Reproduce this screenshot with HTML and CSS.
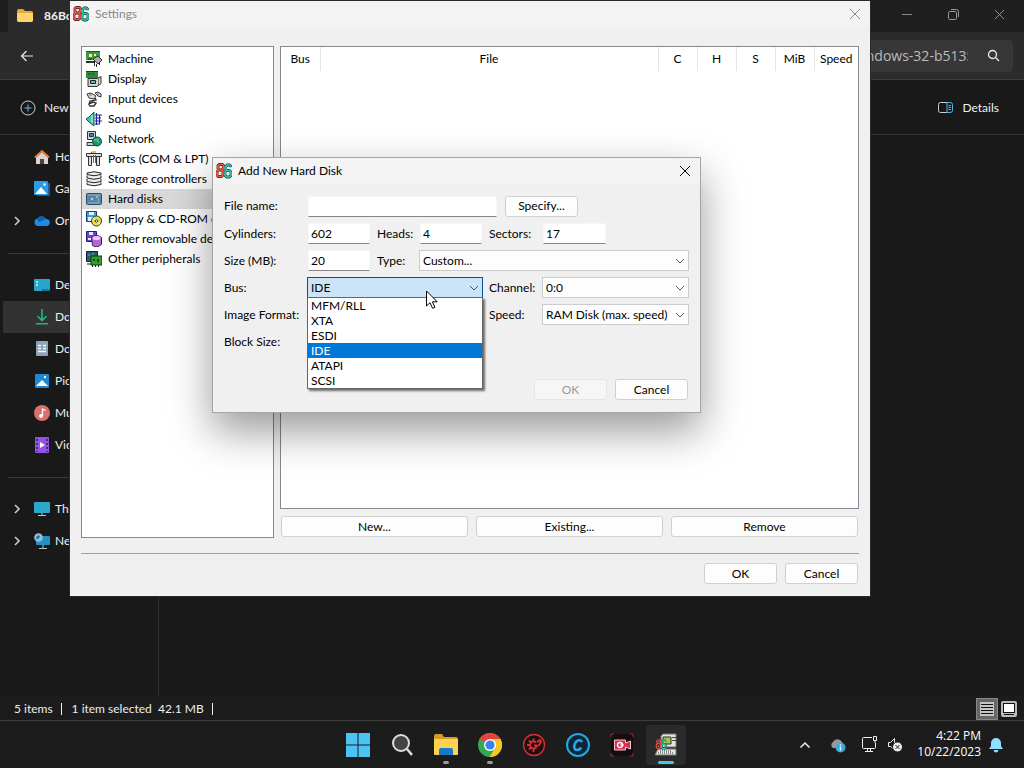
FILE: index.html
```html
<!DOCTYPE html>
<html lang="en">
<head>
	<meta charset="UTF-8">
	<title>86Box Settings</title>
	<link rel="stylesheet" href="styles.css">
</head>
<body>
<!-- shared symbols -->
<svg class="symbols" aria-hidden="true">
	<symbol id="logo" viewBox="0 0 16 16">
		<g fill="none" stroke-linejoin="round" stroke-linecap="round">
			<path d="M3 1.500h3.500l1 1v2.500l-1 1.500.500 1.500v4l-1.500 1.500H2l-1-1.500V9L2.500 7l-.500-1.500v-3zM2.500 7H6" stroke="#4a1512" stroke-width="2.800"/>
			<path d="M14.500 3l-1-1H11L9 4.500V6l1.500 1.500L9 9v3.500L10.500 14h3l1.500-1.500V9l-1.500-1.500h-3" stroke="#0c3d39" stroke-width="2.800"/>
			<path d="M3 1.500h3.500l1 1v2.500l-1 1.500.500 1.500v4l-1.500 1.500H2l-1-1.500V9L2.500 7l-.500-1.500v-3zM2.500 7H6" stroke="#f05a4c" stroke-width="1.600"/>
			<path d="M14.500 3l-1-1H11L9 4.500V6l1.500 1.500L9 9v3.500L10.500 14h3l1.500-1.500V9l-1.500-1.500h-3" stroke="#35cdb2" stroke-width="1.600"/>
			<path d="M4.500 4h1M3.500 10.500h1M12 11h.5M12 4.500h2" stroke="#f3d8d0"/>
		</g>
	</symbol>
	<symbol id="down" viewBox="0 0 10 10"><path d="M1 3l4 4 4-4" fill="none" stroke="#555"/></symbol>
	<symbol id="right" viewBox="0 0 10 10"><path d="M3 1l4 4-4 4" fill="none" stroke="#ccc" stroke-width="1.600"/></symbol>
	<symbol id="cross" viewBox="0 0 12 12"><path d="M1 1l10 10M11 1L1 11" fill="none" stroke="currentColor"/></symbol>
</svg>

<div class="explorer">
	<div class="tabs">
		<div class="tab">
			<svg width="18" height="16" viewBox="0 0 18 16"><path d="M1 3q0-2 2-2h4l2 2h6q2 0 2 2v7q0 2-2 2H3q-2 0-2-2z" fill="#e9a63a"/><path d="M1 5h16v7q0 2-2 2H3q-2 0-2-2z" fill="#fdd46c"/></svg>
			<b>86Box</b>
		</div>
		<div class="winbtns">
			<button aria-label="Minimize"><svg width="10" height="10"><path d="M0 5.500h10" stroke="#888"/></svg></button>
			<button aria-label="Restore"><svg width="11" height="11" fill="none" stroke="#999"><rect x=".5" y="2.500" width="8" height="8" rx="1"/><path d="M3 .5h5.500q2 0 2 2V8"/></svg></button>
			<button aria-label="Close"><svg width="11" height="11"><use href="#cross"/></svg></button>
		</div>
	</div>
	<div class="nav">
		<button class="back" aria-label="Back"><svg width="14" height="12" fill="none" stroke="#eee" stroke-width="1.200"><path d="M6.500 1L1.500 6l5 5M1.500 6H13"/></svg></button>
		<div class="search">
			<input type="text" aria-label="Search" value="86Box-Windows-32-b5135">
			<svg width="13" height="13" fill="none" stroke="#eee" stroke-width="1.300"><circle cx="5.500" cy="5.500" r="4"/><path d="M8.500 8.500L12 12"/></svg>
		</div>
	</div>
	<div class="tools">
		<button><svg width="16" height="16" fill="none" stroke="#c8d2d8"><circle cx="8" cy="8" r="7"/><path d="M8 4.500v7M4.500 8h7" stroke="#62b8e8"/></svg>New</button>
		<button><svg width="17" height="14" fill="none" stroke="#ccc"><path d="M10 1.500H3.500q-2 0-2 2v6q0 2 2 2H10"/><path d="M10 1.500h3q2.500 0 2.500 2v6q0 2-2.500 2h-3zM11.500 4.500H14M11.500 6.500H14M11.500 8.500H14" stroke="#4fb6ee"/></svg>Details</button>
	</div>
	<div class="files">
		<nav class="side">
			<a href="#"><i></i><svg width="16" height="16"><path d="M2 8l6-5 6 5v7h-4v-5H6v5H2z" fill="#d6d3d3"/><path d="M10 15v-5H6v5z" fill="#5d3b2e"/><path d="M1 8.500L8 2l7 6.500" fill="none" stroke="#e77b3a" stroke-width="2"/></svg>Home</a>
			<a href="#"><i></i><svg width="16" height="16"><rect x="3" y="2" width="13" height="13" rx="1" fill="#1a5c9f"/><rect width="14" height="14" rx="1" fill="#2b9be8"/><path d="M1 13l6-7 6 7z" fill="#fff"/><circle cx="10.500" cy="3.500" r="1.200" fill="#fff"/></svg>Gallery</a>
			<a href="#"><svg class="arrow"><use href="#right"/></svg><svg width="16" height="16"><path d="M4 13a3.800 3.800 0 0 1-.5-7.500A5 5 0 0 1 12 6a3.500 3.500 0 0 1 .5 7z" fill="#1b8ce8"/><path d="M3 6a5 5 0 0 1 9 0L5 9z" fill="#0b62b8"/></svg>OneDrive</a>
			<hr>
			<a href="#"><i></i><svg width="16" height="16"><rect y="2" width="16" height="12" rx="1" fill="#29a5c8"/><path d="M2 5h2M2 8h2" stroke="#d8faff" stroke-width="1.500"/><path d="M8 14h8v-2H8z" fill="#1479a0"/></svg>Desktop</a>
			<a href="#" class="on"><i></i><svg width="16" height="16" fill="none" stroke="#22b48c" stroke-width="1.600"><path d="M8 0v11M3.500 7L8 11.500 12.500 7M2 14.700h12"/></svg>Downloads</a>
			<a href="#"><i></i><svg width="16" height="16"><rect x="2" width="12" height="15" rx="1" fill="#8fa3b8"/><path d="M4 4.500h3M4 7.500h3M4 10.500h8M9 4.500h3M9 7.500h3" stroke="#f4f8ff" stroke-width="1.500"/></svg>Documents</a>
			<a href="#"><i></i><svg width="16" height="16"><rect x="1" y="1" width="14" height="14" rx="1" fill="#1f86d6"/><path d="M2 13l6-6 6 6z" fill="#fff"/><circle cx="11" cy="4" r="1.200" fill="#fff"/></svg>Pictures</a>
			<a href="#"><i></i><svg width="16" height="16"><circle cx="8" cy="8" r="8" fill="#d9706a"/><path d="M8.500 11V4l3 1.500" fill="none" stroke="#fff" stroke-width="1.300"/><circle cx="7" cy="11" r="1.900" fill="#fff"/></svg>Music</a>
			<a href="#"><i></i><svg width="16" height="16"><rect x="1" width="14" height="16" rx="1" fill="#9155df"/><path d="M3 2v13M13 2v13" stroke="#4d2590" stroke-width="2" stroke-dasharray="2 2"/><path d="M6 5l5 3-5 3z" fill="#fff"/></svg>Videos</a>
			<hr>
			<a href="#"><svg class="arrow"><use href="#right"/></svg><svg width="16" height="16"><rect y="1" width="16" height="11" rx="1" fill="#2ba8cc"/><path d="M8 12v2.500M4 14.500h8" stroke="#b8c4ca"/></svg>This PC</a>
			<a href="#"><svg class="arrow"><use href="#right"/></svg><svg width="16" height="16"><rect x="2" y="3" width="14" height="9" rx="1" fill="#2093c4"/><path d="M9 12v3M5 15.500h8" stroke="#b8c4ca"/><circle cx="4.500" cy="4.500" r="4.300" fill="#8fc1de"/><path d="M2 4l3-2 1 2-3 3z" fill="#2a6f97"/></svg>Network</a>
		</nav>
	</div>
	<footer class="status">
		<span>5 items</span><span>1 item selected&nbsp; 42.1 MB</span><span></span>
		<button class="view on" aria-label="List"><svg width="20" height="20" stroke="#111"><rect x="3" y="3" width="14" height="14" fill="#c4c4c4" stroke="none"/><path d="M4 5.500h12M4 8.500h12M4 11.500h12M4 14.500h12"/></svg></button>
		<button class="view" aria-label="Thumbnails"><svg width="16" height="16"><rect width="16" height="16" rx="2" fill="#bcbcbc"/><rect x="2.500" y="2.500" width="11" height="9" fill="#fff" stroke="#111"/><path d="M3 13.500h10" stroke="#111"/></svg></button>
	</footer>
</div>

<div class="window settings">
	<div class="title"><svg class="logo"><use href="#logo"/></svg>Settings<button aria-label="Close settings"><svg width="12" height="12"><use href="#cross"/></svg></button></div>
	<div class="panes">
		<ul class="list">
			<li><svg width="16" height="16"><path d="M0 0h14v9H0z" fill="#3d9b3c"/><path d="M0 0h14v1H0z" fill="#1b571c"/><path d="M3 3h3v3H3zM8 3h2v2H8z" fill="#f2f19b"/><path d="M0 10h9v2H0z" fill="#173d1b"/><path d="M7 8l5-3 4 4-4 4z" fill="#aaa" stroke="#333"/><path d="M8.500 11v4M10.500 13v3M13.500 11v3M2 8h4" stroke="#222"/></svg>Machine</li>
			<li><svg width="16" height="16"><path d="M0 0h12v7H0z" fill="#2f8a36"/><path d="M0 .5h12M2 3h2M6 3h2" stroke="#134617"/><path d="M2 7.500h9l4-2v7l-4 3H2z" fill="#d2d5c4" stroke="#333"/><path d="M4.500 9.500h5v3h-5z" fill="#51b8d8" stroke="#222"/><path d="M12.500 7v7" stroke="#777"/></svg>Display</li>
			<li><svg width="16" height="16" fill="#ddd" stroke="#333"><path d="M1 3l4-1 5 3-2 3-5-1z"/><path d="M9 2l3-1 3 2v3l-3-1z"/><path d="M9 7l1 2-6 1-1 3 4-2 3 1-2 3H3" fill="none" stroke-width="1.400"/><path d="M3 4h3M11 3h2" stroke="#777"/></svg>Input devices</li>
			<li><svg width="16" height="16"><path d="M0 8l3-2 5-5v14l-5-4z" fill="#42c5ad" stroke="#17534d"/><path d="M6 4v8" stroke="#b2fff1"/><path d="M9 4h7M9 7h6M9 10h7M9 13h5M10.500 2v12M13.500 4v9" stroke="#2025a5" stroke-width="1.200"/></svg>Sound</li>
			<li><svg width="16" height="16"><path d="M1.500.5h8v8h-8z" fill="#ccd7d7" stroke="#333"/><path d="M3.500 2.500h4v3h-4z" fill="#388fac" stroke="#234"/><path d="M1 11.500h8v3H1z" fill="#ccc" stroke="#333"/><circle cx="11" cy="10.500" r="4.500" fill="#1c966c" stroke="#124a38"/><path d="M8 9h3l2 3M11 7l2 2" stroke="#74dfac" fill="none"/></svg>Network</li>
			<li><svg width="16" height="16" fill="#ddd" stroke="#333"><path d="M.5 2.500h15v3H.5zM2.500 5.500h3v9h-3zM10.500 5.500h3v9h-3z"/><path d="M7.500 4v8M9.500 4v8M5 1.500h5" stroke="#666"/><path d="M6 0h4v2H6z" fill="#d1c849" stroke="none"/></svg>Ports (COM &amp; LPT)</li>
			<li><svg width="16" height="16" fill="#eee" stroke="#222"><path d="M1 11.500v2q7 2.500 14 0v-2M1 8v2.500q7 2.500 14 0V8M1 4.500V7q7 2.500 14 0V4.500"/><path d="M1 2q7-2.500 14 0v1.500q-7 2.500-14 0z"/></svg>Storage controllers</li>
			<li class="on"><svg width="16" height="16"><rect x=".5" y="2.500" width="15" height="11" rx="1" fill="#5d86a8" stroke="#284b67"/><path d="M2 4h12M2 12h12" stroke="#8fb0c8"/><circle cx="6" cy="8" r="2.500" fill="#7ba2bf" stroke="#4a7294"/><path d="M10 6h2M12 9h1M5 8h2" stroke="#dcebf7"/></svg>Hard disks</li>
			<li><svg width="16" height="16"><path d="M.5.5h10v10H.5z" fill="#36a3d7" stroke="#183c7c"/><path d="M3 1h5v3H3zM2 6h6v4H2z" fill="#e4f5ff"/><circle cx="10.500" cy="10" r="5" fill="#e5de55" stroke="#39410c"/><path d="M7 7l3 3M11 11l3 2" stroke="#fff"/><circle cx="10.500" cy="10" r="1.300" fill="#fff" stroke="#333"/></svg>Floppy &amp; CD-ROM drives</li>
			<li><svg width="16" height="16"><path d="M.5.5h10v10H.5z" fill="#5b4bd2" stroke="#261c75"/><path d="M3 1h4v3H3zM2 7h3v2H2z" fill="#f0e7ff"/><path d="M5.500 6.500q5-4 10 0v7q-5 4-9 1z" fill="#b767d1" stroke="#4a1a69"/><ellipse cx="10.500" cy="7" rx="4" ry="2" fill="#efbfff"/></svg>Other removable devices</li>
			<li><svg width="16" height="16"><path d="M.5.500h11v10H.5z" fill="#285d74" stroke="#123"/><path d="M2 12v2M4 12v2" stroke="#222"/><path d="M5 5h11v9H5z" fill="#339d32" stroke="#113d13"/><path d="M7 8h2v2H7zM11 8h2v3h-2z" fill="#174f19"/><path d="M2 4h2M6 3h2" stroke="#65bd9b"/><path d="M6.500 14v2M9.500 14v2M12.500 14v2" stroke="#222"/></svg>Other peripherals</li>
		</ul>
		<div class="disks">
			<div class="tablebox">
				<table>
					<thead>
						<tr><th class="narrow">Bus</th><th>File</th><th class="narrow">C</th><th class="narrow">H</th><th class="narrow">S</th><th class="narrow">MiB</th><th class="speed">Speed</th></tr>
					</thead>
				</table>
			</div>
			<div class="actions"><button class="btn">New...</button><button class="btn">Existing...</button><button class="btn">Remove</button></div>
		</div>
	</div>
	<div class="bottom"><button class="btn">OK</button><button class="btn">Cancel</button></div>
</div>

<div class="window dialog">
	<div class="title"><svg class="logo"><use href="#logo"/></svg>Add New Hard Disk<button aria-label="Close dialog"><svg width="12" height="12"><use href="#cross"/></svg></button></div>
	<form class="form">
		<label for="file">File name:</label>
		<div class="filerow"><input type="text" id="file"><button type="button" class="btn">Specify...</button></div>

		<label for="cyl">Cylinders:</label><input type="text" id="cyl" value="602">
		<label for="heads">Heads:</label><input type="text" id="heads" value="4">
		<label for="sectors">Sectors:</label><input type="text" id="sectors" class="sectors" value="17">

		<label for="size">Size (MB):</label><input type="text" id="size" value="20">
		<label for="type">Type:</label>
		<div class="drop wide"><select id="type"><option>Custom...</option></select><svg><use href="#down"/></svg></div>

		<label for="bus">Bus:</label>
		<div class="drop bus">
			<select id="bus"><option>IDE</option></select><svg><use href="#down"/></svg>
			<ul class="options">
				<li>MFM/RLL</li>
				<li>XTA</li>
				<li>ESDI</li>
				<li class="on">IDE</li>
				<li>ATAPI</li>
				<li>SCSI</li>
			</ul>
			<svg class="cursor" viewBox="0 0 12 19"><path d="M.5 1v15l3.500-3.300 2.600 5.600 2.300-1-2.500-5.500h4.800z" fill="#fff" stroke="#000"/></svg>
		</div>
		<label for="channel">Channel:</label>
		<div class="drop"><select id="channel"><option>0:0</option></select><svg><use href="#down"/></svg></div>

		<span class="format">Image Format:</span>
		<label for="speed">Speed:</label>
		<div class="drop"><select id="speed"><option>RAM Disk (max. speed)</option></select><svg><use href="#down"/></svg></div>

		<span>Block Size:</span>
	</form>
	<div class="bottom"><button class="btn" disabled>OK</button><button class="btn">Cancel</button></div>
</div>

<div class="taskbar">
	<div class="apps">
		<button aria-label="Start"><svg width="24" height="24" fill="#4cc2f5"><path d="M0 0h11.500v11.500H0zM12.500 0H24v11.500H12.500zM0 12.500h11.500V24H0zM12.500 12.500H24V24H12.500z"/></svg></button>
		<button aria-label="Search"><svg width="24" height="24"><circle cx="11" cy="10" r="8" fill="#444" stroke="#ddd" stroke-width="2"/><path d="M17 16l5 6" stroke="#ddd" stroke-width="2.500"/></svg></button>
		<button aria-label="File Explorer" class="open"><svg width="24" height="24"><path d="M0 3q0-2 2-2h6l2 3h12q2 0 2 2v14H0z" fill="#d69d1f"/><path d="M0 6h24v15q0 1-1 1H1q-1 0-1-1z" fill="#fcd253"/><path d="M5 22v-5q0-2 2-2h10q2 0 2 2v5z" fill="#1679cb"/></svg></button>
		<button aria-label="Chrome" class="open"><svg width="24" height="24" viewBox="0 0 24 24"><circle cx="12" cy="12" r="12" fill="#35a853"/><path d="M12 12L1.600 6A12 12 0 0 1 22.400 6z" fill="#e6443a"/><path d="M12 6h10.400A12 12 0 0 1 11.500 24L17 15z" fill="#fbc624"/><circle cx="12" cy="12" r="6" fill="#fff"/><circle cx="12" cy="12" r="4.600" fill="#3b80ee"/></svg></button>
		<button aria-label="Game app"><svg width="24" height="24" fill="none" stroke="#db3036"><circle cx="12" cy="12" r="10.500" fill="#210f0f" stroke-width="1.300"/><path d="M14 9.500a3.500 3.500 0 1 0 0 5v-2h-2" stroke-width="1.800"/><path d="M11.500 5.500v3M11.500 16v3M5 12h3M7 7.500l2 2M7 16.500l2-2M15 9l3-2 1 2-2 3-2 1" stroke-width="1.800"/></svg></button>
		<button aria-label="C app"><svg width="24" height="24" fill="none" stroke="#27a7e4"><circle cx="12" cy="12" r="11" fill="#0c2637" stroke-width="2"/><path d="M16 9q-1-2.500-4-1.500T8.300 13Q8 17 11 17t4-2.500" stroke-width="2.600"/></svg></button>
		<button aria-label="Recorder"><svg width="24" height="24"><rect x="1" y="1" width="22" height="22" fill="#160d10"/><path d="M1 4V1h3M20 1h3v3M1 20v3h3M20 23h3v-3" stroke="#a52837" fill="none"/><path d="M4.500 7h11v3l5-2v8l-5-2v3h-11z" fill="#d72e4e" stroke="#f4c6cd"/><circle cx="10" cy="12" r="2.500" fill="none" stroke="#fff" stroke-width="1.300"/><path d="M10 12h4" stroke="#fff"/></svg></button>
		<button aria-label="86Box" class="open active"><svg width="24" height="24"><path d="M9 1h13v13H7V3z" fill="#e4e4da" stroke="#777"/><path d="M9 4h8v7H9z" fill="#9cc84c" stroke="#333"/><path d="M18 4.500h4M18 7.500h4" stroke="#444"/><path d="M4 16h18v6H1z" fill="#e7e7df" stroke="#777"/><path d="M4 20h16M6 18h12" stroke="#333" stroke-dasharray="1 1"/><svg x="1" y="6" width="12" height="11"><use href="#logo"/></svg></svg></button>
	</div>
	<div class="tray">
		<svg width="12" height="8" fill="none" stroke="#eee" stroke-width="1.500"><path d="M1.500 6.500L6 2l4.500 4.500"/></svg>
		<svg class="cloud" width="17" height="16"><path d="M4 11a3.500 3.500 0 0 1 0-6 5 5 0 0 1 9 0l2 6z" fill="#999"/><circle cx="11.500" cy="10.500" r="5" fill="#3ba9e3"/><path d="M11.500 9.500v4M11.500 7.200v1.300" stroke="#fff" stroke-width="1.400"/></svg>
		<svg class="net" width="17" height="17" fill="none" stroke="#eee"><path d="M11 1.500H2.500q-1 0-1 1v9q0 1 1 1h11q1 0 1-1V7M6.500 12.500v3M9.500 12.500v3M4 15.500h8M12.500.5h3v4h-3zM14 4.500V7"/></svg>
		<svg class="vol" width="16" height="16"><path d="M1.500 5.500h2l4-4v11l-4-3h-2z" fill="none" stroke="#eee"/><circle cx="10.500" cy="10" r="5" fill="#eee" stroke="#1c1c1c"/><path d="M8.500 8l4 4M12.500 8l-4 4" stroke="#222"/></svg>
		<div class="clock">4:22 PM<br>10/22/2023</div>
		<svg class="bell" width="14" height="16" fill="#8fe0fb"><path d="M0 12l2-3V6a5 5 0 0 1 10 0v3l2 3zM4.500 13h5q-.5 2.500-2.500 2.500T4.500 13z"/></svg>
	</div>
</div>
</body>
</html>
```
FILE: styles.css
```css
*{
	box-sizing: border-box;
}
body{
	margin: 0;
	height: 100vh;
	display: flex;
	flex-direction: column;
	overflow: hidden;
	position: relative;
	background: #191919;
	color: #000;
	font: 12px/16px Lato, "Open Sans", sans-serif;
}
button, input, select{
	font: inherit;
	color: inherit;
	margin: 0;
}
button{
	padding: 0;
	border: 0;
	background: none;
}
svg{
	display: block;
	flex: none;
}
ul{
	list-style: none;
	margin: 0;
	padding: 0;
}
.symbols{
	position: absolute;
	width: 0;
	height: 0;
}

/* file explorer */
.explorer{
	flex: 1;
	min-height: 0;
	display: flex;
	flex-direction: column;
	color: #eee;
}
.tabs{
	height: 32px;
	display: flex;
	justify-content: space-between;
	background: #1f1f1f;
}
.tab{
	display: flex;
	align-items: center;
	gap: 10px;
	width: 240px;
	margin-left: 8px;
	padding-left: 8px;
	background: #2b2b2b;
}
.winbtns{
	display: flex;
	align-items: center;
	color: #999;
	padding: 0 2px 4px 0;
}
.winbtns button{
	width: 46px;
	display: grid;
	place-items: center;
}
.nav{
	height: 48px;
	display: flex;
	align-items: center;
	justify-content: space-between;
	padding: 0 11px 0 20px;
	background: #2b2b2b;
	border-bottom: 1px solid #3c3c3c;
}
.search{
	display: flex;
	align-items: center;
	gap: 19px;
	width: 232px;
	height: 32px;
	padding: 0 13px 0 23px;
	background: #373737;
	border-radius: 4px;
}
.search input{
	flex: 1;
	min-width: 0;
	padding: 0;
	border: 0;
	background: none;
	color: #bbb;
	font: 14px "Open Sans", sans-serif;
}
.tools{
	height: 55px;
	display: flex;
	align-items: center;
	justify-content: space-between;
	padding: 1px 25px 0 20px;
	border-bottom: 1px solid #333;
}
.tools button{
	display: flex;
	align-items: center;
	gap: 8px;
}
.files{
	flex: 1;
	min-height: 0;
	overflow: hidden;
	display: flex;
}
.side{
	width: 159px;
	padding: 6px 0 0 3px;
	border-right: 1px solid #2f2f2f;
}
.side a{
	display: flex;
	align-items: center;
	height: 32px;
	padding-left: 9px;
	color: #eee;
	text-decoration: none;
}
.side a.on{
	background: #323232;
}
.side i, .arrow{
	width: 10px;
	height: 10px;
	margin-right: 12px;
}
.side svg:last-of-type{
	margin-right: 5px;
}
.side hr{
	height: 1px;
	margin: 16px 0 15px 5px;
	border: 0;
	background: #3a3a3a;
}
.status{
	height: 24px;
	display: flex;
	align-items: center;
	padding: 1px 7px 0 14px;
	background: #1c1c1c;
}
.status span + span{
	margin-left: 8px;
	padding-left: 10px;
	border-left: 1px solid #eee;
	line-height: 12px;
	min-height: 12px;
}
.view{
	margin-left: 3px;
}
.view.on{
	margin-left: auto;
	border: 1px solid #888;
	background: #666;
}

/* windows */
.window{
	position: absolute;
	display: flex;
	flex-direction: column;
	background: #f0f0f0;
	border: 1px solid #2a2a2a;
}
.title{
	display: flex;
	align-items: center;
	height: 25px;
	padding: 0 9px 0 3px;
	background: #f3f3f3;
}
.title button{
	margin-left: auto;
}
.logo{
	width: 16px;
	height: 16px;
	margin-right: 6px;
}
.btn{
	height: 21px;
	min-width: 73px;
	background: #fdfdfd;
	border: 1px solid #d0d0d0;
	border-radius: 3px;
	line-height: 18px;
}
.btn:disabled{
	color: #999;
	background: #f6f6f6;
	border-color: #e6e6e6;
}
.bottom{
	display: flex;
	justify-content: flex-end;
	gap: 8px;
}
.settings{
	left: 69px;
	top: 0;
	width: 802px;
	height: 597px;
	padding: 0 11px 12px;
}
.settings .title{
	margin: 0 -11px 20px;
	color: #888;
}
.panes{
	flex: 1;
	display: grid;
	grid-template-columns: 193px 1fr;
	gap: 6px;
}
.list{
	border: 1px solid #828790;
	background: #fff;
	padding: 2px 0;
}
.list li{
	display: flex;
	align-items: center;
	gap: 6px;
	height: 20px;
	padding-left: 4px;
	white-space: nowrap;
}
.list li.on{
	background: #d9d9d9;
}
.disks{
	display: flex;
	flex-direction: column;
	gap: 7px;
}
.tablebox{
	flex: 1;
	border: 1px solid #828790;
	background: #fff;
}
table{
	width: 100%;
	table-layout: fixed;
	border-collapse: collapse;
}
th{
	height: 24px;
	padding: 0;
	border-right: 1px solid #e5e5e5;
	font-weight: normal;
}
.narrow{
	width: 39px;
}
.speed{
	width: 44px;
	border: 0;
}
.actions{
	display: flex;
	gap: 8px;
	padding: 0 1px 1px;
}
.actions .btn{
	flex: 1;
}
.settings .bottom{
	margin-top: 15px;
	padding: 9px 1px 0;
	border-top: 1px solid #a0a0a0;
}
.dialog{
	left: 212px;
	top: 157px;
	width: 489px;
	height: 256px;
	border-color: #a5a5a5;
	box-shadow: 0 18px 40px rgba(0, 0, 0, .4);
}
.form{
	flex: 1;
	display: grid;
	grid-template-columns: 84px 62px 50px 62px 61px 1fr;
	grid-template-rows: 22px;
	grid-auto-rows: 21px;
	align-content: start;
	align-items: center;
	row-gap: 6px;
	padding: 12px 12px 0 11px;
}
.form label, .form span{
	padding-left: 7px;
	white-space: nowrap;
}
.form > :nth-child(1), .form > [for="cyl"], .form > [for="size"], .form > [for="bus"], .form span{
	grid-column: 1;
	padding-left: 0;
}
.form input{
	width: 100%;
	height: 21px;
	padding: 0 2px;
	border: 1px solid #f6f6f6;
	border-bottom-color: #868686;
	background: #fff;
}
.filerow{
	grid-column: 2 / -1;
	display: flex;
	gap: 8px;
}
.form .filerow input{
	width: 189px;
}
.form .sectors{
	width: 63px;
}
.drop{
	position: relative;
	margin: 0 -1px;
}
.drop.wide{
	grid-column: 4 / -1;
}
.drop.bus{
	grid-column: 2 / 5;
}
.drop select{
	display: block;
	appearance: none;
	width: 100%;
	height: 21px;
	padding: 0 3px;
	border: 1px solid #ccc;
	border-radius: 0;
	background: #fdfdfd;
}
.drop svg{
	position: absolute;
	right: 4px;
	top: 6px;
	width: 10px;
	height: 10px;
	pointer-events: none;
}
.drop.bus select{
	background: #cce4f7;
	border-color: #005499;
}
.options{
	position: absolute;
	z-index: 1;
	top: 20px;
	left: 0;
	right: 0;
	border: 1px solid #666;
	background: #fff;
	box-shadow: 2px 2px 2px rgba(0, 0, 0, .55);
}
.options li{
	height: 15px;
	padding-left: 3px;
	line-height: 15px;
}
.options li.on{
	background: #0078d7;
	color: #fff;
}
.drop .cursor{
	z-index: 2;
	left: 119px;
	right: auto;
	top: 13px;
	width: 12px;
	height: 19px;
}
.form .format{
	grid-column: 1 / 5;
}
.dialog .bottom{
	padding: 0 12px 12px;
}

/* taskbar */
.taskbar{
	height: 48px;
	display: grid;
	grid-template-columns: 1fr auto 1fr;
	align-items: center;
	background: #1c1c1c;
	border-top: 1px solid #3d3d3d;
	color: #fff;
}
.apps{
	grid-column: 2;
	display: flex;
	gap: 4px;
}
.apps button{
	position: relative;
	width: 40px;
	height: 40px;
	display: grid;
	place-items: center;
	border-radius: 4px;
}
.apps .active{
	background: #2b2b2b;
}
.apps .open::after{
	content: "";
	position: absolute;
	bottom: 1px;
	left: 17px;
	width: 6px;
	height: 3px;
	border-radius: 2px;
	background: #999;
}
.apps .active::after{
	left: 12px;
	width: 16px;
	background: #4cc2f5;
}
.tray{
	display: flex;
	align-items: center;
	justify-content: flex-end;
	padding-right: 21px;
}
.cloud{
	margin-left: 18px;
}
.net{
	margin-left: 15px;
}
.vol{
	margin-left: 9px;
}
.clock{
	margin-left: 14px;
	padding-bottom: 1px;
	text-align: right;
	font-family: "Open Sans", sans-serif;
}
.bell{
	margin-left: 8px;
}
```
